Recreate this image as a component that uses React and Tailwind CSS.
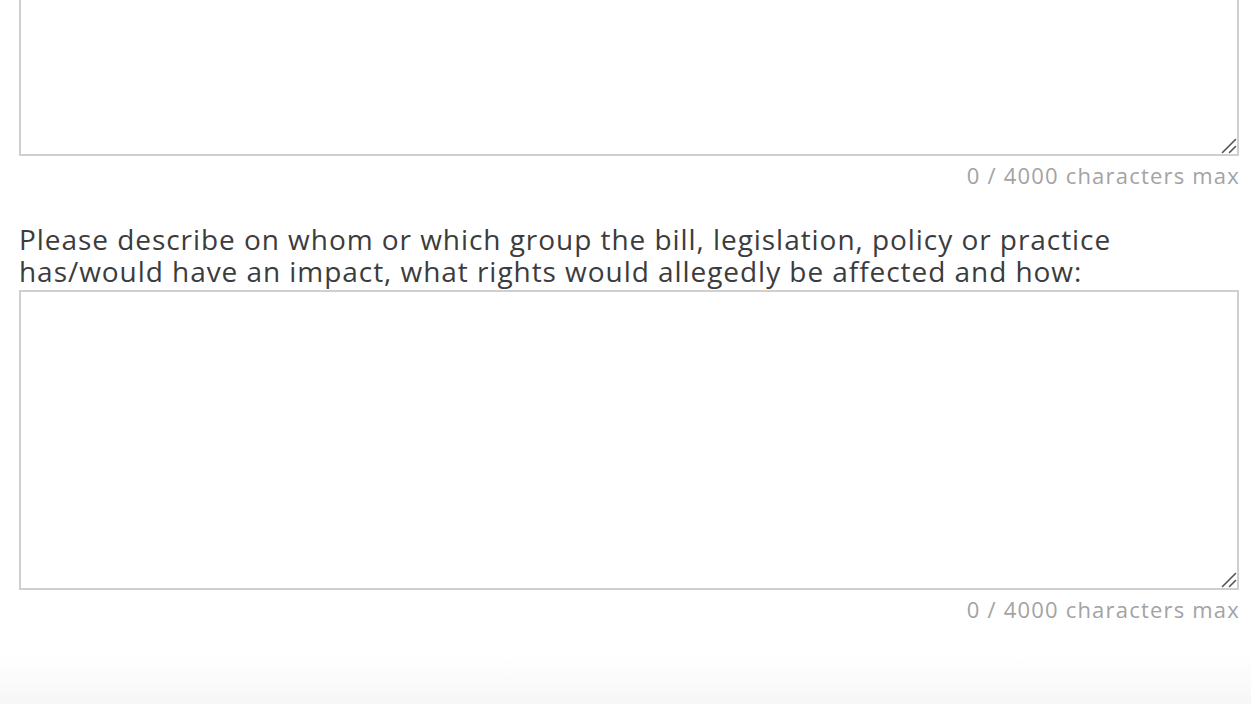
import React from "react";

const Grip = () => (
  <svg
    className="absolute right-[2px] bottom-[2px] pointer-events-none"
    width="16"
    height="16"
    viewBox="0 0 16 16"
  >
    <path d="M1.5 14.5 L14.5 1.5 M8.5 14.5 L14.5 8.5" stroke="#555" strokeWidth="1.6" strokeLinecap="round" />
  </svg>
);

const Field = ({ height, className = "" }) => {
  return (
    <div className={className}>
      <div className="relative">
        <textarea
          className={`block w-full ${height} border-2 border-[#cfcfcf] bg-white resize-none outline-none`}
        />
        <Grip />
      </div>
      <p className="mt-[6px] text-right text-[22px] leading-[26px] tracking-[1.2px] -mr-[1px] text-[#a3a3a3]">
        0 / 4000 characters max
      </p>
    </div>
  );
};

const App = () => {
  return (
    <div className="w-[1251px] h-[704px] overflow-hidden bg-white font-['Open_Sans',sans-serif]">
      <div className="ml-[19px] w-[1220px]">
        <Field height="h-[300px]" className="-mt-[144px]" />

        <label className="block mt-[35px] text-[28px] leading-[32px] tracking-[0.95px] text-[#3c3c3c]">
          Please describe on whom or which group the bill, legislation, policy or practice
          <br />
          has/would have an impact, what rights would allegedly be affected and how:
        </label>

        <Field height="h-[300px]" className="mt-[3px]" />
      </div>

      <div className="mt-[32px] h-[60px] bg-gradient-to-b from-white to-[#f5f5f5]" />
    </div>
  );
};

export default App;
